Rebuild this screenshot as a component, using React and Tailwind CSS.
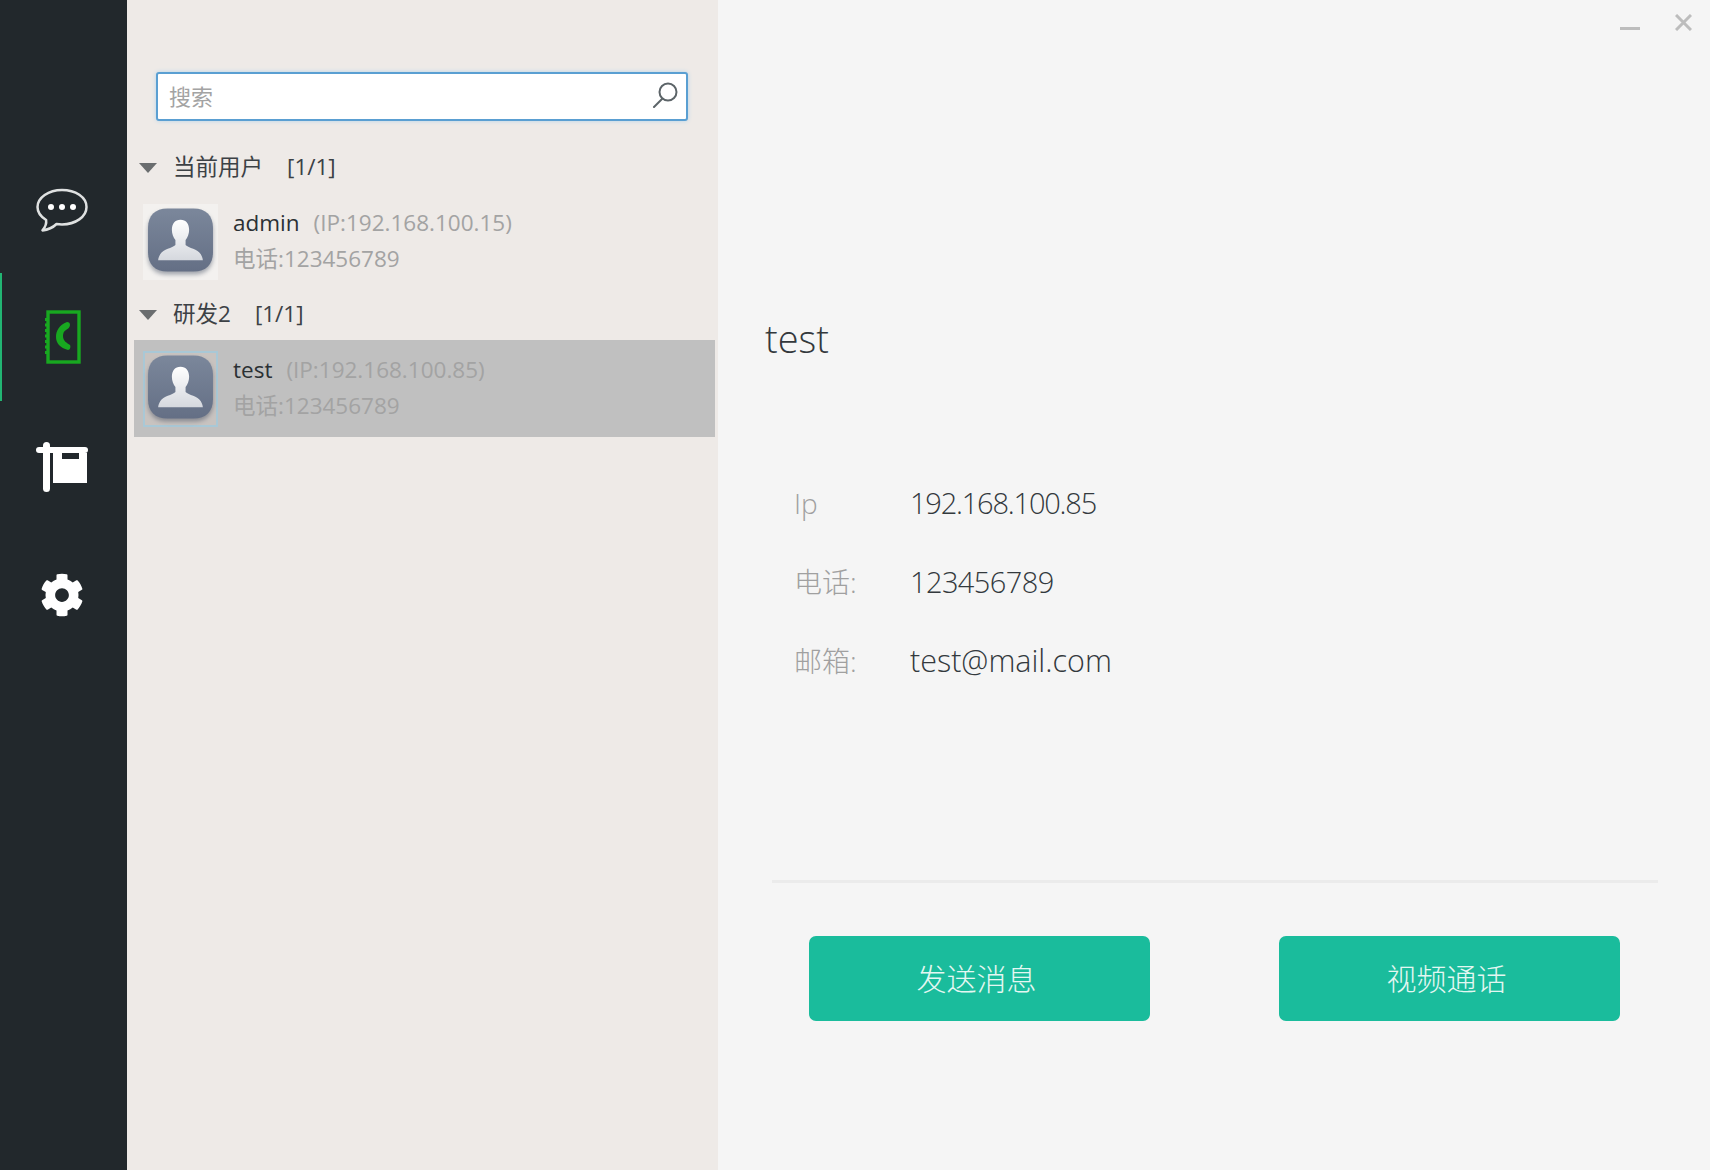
import { FaCog } from 'react-icons/fa';

const font = "font-['Open_Sans','Noto_Sans_CJK_SC',sans-serif]";

function ChatIcon() {
  return (
    <svg width="54" height="46" viewBox="0 0 54 46" fill="none">
      <path
        d="M27 2C13.500 2 2.500 9.600 2.500 19c0 5.200 3.400 9.800 8.600 13 .6 3.400-.8 7-3.600 10.400 5.600-.6 10.600-3 14-6.400 1.800.3 3.600.4 5.500.4 13.500 0 24.500-7.600 24.500-17.400S40.500 2 27 2z"
        stroke="#dfe1e1"
        strokeWidth="2.500"
        strokeLinejoin="round"
      />
      <circle cx="16" cy="19" r="3" fill="#fff" />
      <circle cx="27" cy="19" r="3" fill="#fff" />
      <circle cx="38" cy="19" r="3" fill="#fff" />
    </svg>
  );
}

function PhoneBookIcon() {
  return (
    <svg width="36" height="54" viewBox="0 0 36 54" fill="none" className="ml-[2px]">
      <rect x="3" y="2" width="31" height="50" stroke="#18a820" strokeWidth="3.400" />
      <path d="M1.500 8v38" stroke="#18a820" strokeWidth="3" strokeDasharray="3 2.500" />
      <path
        d="M22 12C14 15 11 21 11 27c0 6 4 11 12 13 2 0 3-3 2-5-3-2-7-4-7-9 0-3 1-5 3-6 2-1 4-3 4-5 0-2-1-3-3-3z"
        fill="#18a820"
      />
    </svg>
  );
}

function SignIcon() {
  return (
    <svg width="52" height="50" viewBox="0 0 52 50" fill="#fff">
      <rect x="0" y="5" width="52" height="6" rx="3" />
      <rect x="7" y="0" width="7" height="50" rx="3.500" />
      <rect x="17" y="11" width="9" height="6" />
      <rect x="43" y="11" width="8" height="6" />
      <rect x="17" y="17" width="34" height="24" />
    </svg>
  );
}

function SearchIcon() {
  return (
    <svg width="26" height="26" viewBox="0 0 26 26" fill="none" stroke="#5c6468" strokeWidth="2">
      <circle cx="16" cy="10" r="8.500" />
      <path d="M10 17 2 25" strokeLinecap="round" />
    </svg>
  );
}

function Caret() {
  return (
    <svg width="18" height="10" viewBox="0 0 18 10" fill="#6a6d6f">
      <path d="M0 0h18L9 10z" />
    </svg>
  );
}

function Avatar({ id, selected }) {
  return (
    <div
      className={`flex h-[76px] w-[75px] shrink-0 items-start border-2 pt-[1px] pl-[2px] ${
        selected ? 'border-[#a9c8d6] bg-[#c8c3c0]' : 'border-[#f3f1ef] bg-[#f3f1ef]'
      }`}
    >
      <svg width="67" height="66" viewBox="0 0 66 64" className="drop-shadow-[0_3px_2px_rgba(60,70,90,0.45)]">
        <defs>
          <linearGradient id={`bg-${id}`} x1="0" y1="0" x2="0" y2="1">
            <stop offset="0" stopColor="#7b879b" />
            <stop offset="1" stopColor="#646f85" />
          </linearGradient>
          <linearGradient id={`fg-${id}`} x1="0" y1="0" x2="0" y2="1">
            <stop offset="0" stopColor="#ffffff" />
            <stop offset="1" stopColor="#d5d8de" />
          </linearGradient>
        </defs>
        <path
          d="M20 1h26c12 0 19 7 19 19v24c0 12-7 19-19 19H20C8 63 1 56 1 44V20C1 8 8 1 20 1z"
          fill={`url(#bg-${id})`}
        />
        <path
          d="M33 12c-5.500 0-8.500 4-8.500 10 0 4 1.500 8 3.500 10v5c-3 3-12 4-15 9-1 2-2 4-2 6h44c0-2-1-4-2-6-3-5-12-6-15-9v-5c2-2 3.500-6 3.500-10 0-6-3-10-8.500-10z"
          fill={`url(#fg-${id})`}
        />
      </svg>
    </div>
  );
}

function NavItem({ active, children }) {
  return (
    <div
      className={`flex h-[128px] items-center justify-center border-l-2 pr-[5px] ${
        active ? 'border-l-[#22b573]' : 'border-l-transparent pt-[4px]'
      }`}
    >
      {children}
    </div>
  );
}

function Group({ name, count, children }) {
  return (
    <>
      <div className="flex h-[50px] items-center pl-[5px] text-[22.500px] text-[#3c4145]">
        <Caret />
        <span className="mb-[2px] ml-[16px]">{name}</span>
        <span className="mb-[2px] ml-[24px]">{count}</span>
      </div>
      {children}
    </>
  );
}

function Contact({ id, name, ip, selected }) {
  return (
    <div className={`flex h-[97px] items-center pl-[9px] ${selected ? 'bg-[#c0c0c0]' : ''}`}>
      <Avatar id={id} selected={selected} />
      <div className="ml-[15px] flex flex-col pb-[1px] text-[22.500px]">
        <div className="flex h-[34px] items-center">
          <span className="text-[#2b3034]">{name}</span>
          <span className="ml-[14px] text-[#a3a3a3]">{ip}</span>
        </div>
        <div className="mt-[2px] h-[34px] leading-[34px] text-[#a3a3a3]">电话:123456789</div>
      </div>
    </div>
  );
}

function InfoRow({ label, value, valueClass }) {
  return (
    <div className="flex h-[79px] items-center">
      <span className="w-[116px] text-[28px] font-light text-[#a0a0a0]">{label}</span>
      <span className={`font-light text-[#33393d] ${valueClass}`}>{value}</span>
    </div>
  );
}

export default function App() {
  return (
    <div className={`flex h-[1170px] w-[1710px] overflow-hidden bg-[#f5f5f5] ${font}`}>
      <aside className="w-[127px] shrink-0 bg-[#22282c] pt-[145px]">
        <NavItem><ChatIcon /></NavItem>
        <NavItem active><PhoneBookIcon /></NavItem>
        <NavItem><SignIcon /></NavItem>
        <NavItem><FaCog size={44} color="#fff" /></NavItem>
      </aside>

      <section className="w-[591px] shrink-0 bg-[#eeeae7] pt-[72px] pr-[3px] pl-[7px]">
        <div className="ml-[22px] flex h-[49px] w-[532px] items-center justify-between rounded-[3px] border-2 border-[#5a9fd2] bg-white pr-[8px] pl-[11px] shadow-[0_0_4px_#b5d4ea]">
          <span className="text-[22px] text-[#a3a3a3]">搜索</span>
          <div className="mb-[4px]"><SearchIcon /></div>
        </div>
        <div className="mt-[22px]">
          <Group name="当前用户" count="[1/1]">
            <Contact id="admin" name="admin" ip="(IP:192.168.100.15)" />
          </Group>
          <Group name="研发2" count="[1/1]">
            <Contact id="test" name="test" ip="(IP:192.168.100.85)" selected />
          </Group>
        </div>
      </section>

      <main className="flex-1 pl-[47px]">
        <div className="flex h-[40px] items-start justify-end pt-[14px] pr-[18px]">
          <div className="mt-[13px] mr-[35px] h-[3px] w-[20px] bg-[#bdbdbd]" />
          <svg width="17" height="17" viewBox="0 0 17 17" stroke="#bdbdbd" strokeWidth="3">
            <path d="M1 1l15 15M16 1 1 16" />
          </svg>
        </div>
        <h1 className="mt-[273px] h-[50px] text-[38px] leading-[50px] font-light text-[#33383c]">test</h1>
        <div className="mt-[100px] pl-[29px]">
          <InfoRow label="Ip" value="192.168.100.85" valueClass="text-[29px] tracking-[-1.200px]" />
          <InfoRow label="电话:" value="123456789" valueClass="text-[29px] tracking-[-0.600px]" />
          <InfoRow label="邮箱:" value="test@mail.com" valueClass="text-[30.500px]" />
        </div>
        <div className="mt-[180px] ml-[7px] h-[3px] w-[886px] bg-[#ebebeb]" />
        <div className="mt-[53px] ml-[44px] flex gap-[129px]">
          <button className="h-[85px] w-[341px] rounded-[7px] bg-[#1abc9c] pr-[6px] text-[30px] font-light text-[#e4f7f2]">发送消息</button>
          <button className="h-[85px] w-[341px] rounded-[7px] bg-[#1abc9c] pr-[6px] text-[30px] font-light text-[#e4f7f2]">视频通话</button>
        </div>
      </main>
    </div>
  );
}
